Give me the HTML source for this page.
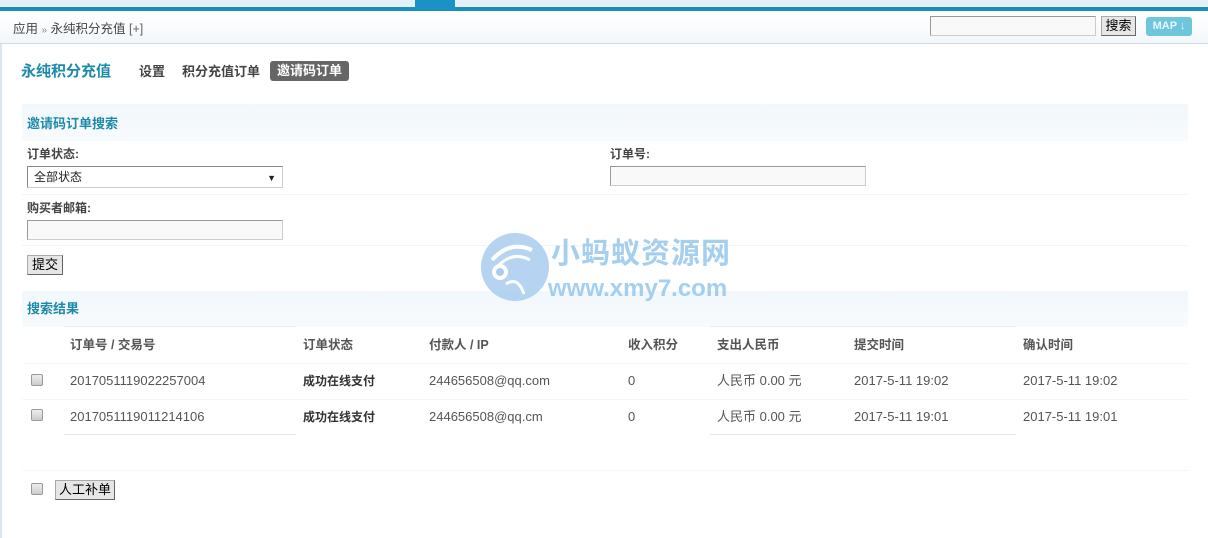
<!DOCTYPE html>
<html><head><meta charset="utf-8"><style>
*{margin:0;padding:0;box-sizing:border-box}
body{width:1208px;height:538px;overflow:hidden;background:#fff;font-family:"Liberation Sans","Noto Sans CJK SC",sans-serif;font-size:12px;color:#333;position:relative}
.a{position:absolute;white-space:nowrap;line-height:16px}
.b{font-weight:bold}
.band{background:linear-gradient(#f1f7fc,#f8fbfd)}
input.t{position:absolute;height:20px;border:1px solid #999;border-right-color:#ccc;border-bottom-color:#ccc;background:#f9f9f9}
.btn{position:absolute;background:#e6e6e6;border:1px solid #aaa;border-right-color:#666;border-bottom-color:#666;font-size:13px;color:#000;text-align:center}
.cb{position:absolute;width:12px;height:12px;border:1px solid #999;border-radius:2px;background:linear-gradient(#eee,#ccc)}
.th{font-weight:bold;color:#555;font-size:12.5px}
.td{color:#555;font-size:13px}
</style></head><body>
<div class="a" style="left:0;top:0;width:1208px;height:7px;background:#e4f1f9"></div>
<div class="a" style="left:0;top:7px;width:1208px;height:4px;background:#1792b6"></div>
<div class="a" style="left:415px;top:0;width:40px;height:11px;background:#1a92c4"></div>
<div class="a" style="left:0;top:11px;width:1208px;height:32px;background:linear-gradient(#fff,#f3f7fa)"></div>
<div class="a" style="left:0;top:43px;width:1208px;height:1px;background:#cfd9df"></div>
<div class="a" style="left:0;top:44px;width:2px;height:494px;background:#d7e7f1"></div>
<div class="a" style="left:13px;top:21px;font-size:12.5px;color:#444">应用 <span style="color:#888;font-size:10px">»</span> 永纯积分充值 <span style="color:#666">[+]</span></div>
<input class="t" style="left:930px;top:16px;width:166px;height:20px">
<div class="btn" style="left:1101px;top:16px;width:35px;height:20px;line-height:18px">搜索</div>
<div class="a" style="left:1146px;top:17px;width:46px;height:19px;background:#6ec6dc;border-radius:3px;color:#e8f8fc;font-size:11px;font-weight:bold;line-height:19px;text-align:center">MAP ↓</div>

<div class="a" style="left:21px;top:62px;font-size:15px;line-height:20px;color:#1c8aab;font-weight:bold">永纯积分充值</div>
<div class="a b" style="left:139px;top:64px;font-size:13px;color:#444">设置</div>
<div class="a b" style="left:182px;top:64px;font-size:13px;color:#444">积分充值订单</div>
<div class="a b" style="left:270px;top:61px;width:79px;height:20px;background:#666;color:#fff;border-radius:3px;font-size:13px;line-height:20px;text-align:center">邀请码订单</div>

<div class="a band" style="left:22px;top:104px;width:1166px;height:37px"></div>
<div class="a b" style="left:27px;top:116px;font-size:13px;color:#1c8aab">邀请码订单搜索</div>
<div class="a b" style="left:27px;top:146px;color:#444">订单状态:</div>
<div class="a" style="left:27px;top:166px;width:256px;height:22px;border:1px solid #888;border-right-color:#ccc;border-bottom-color:#ccc;background:#fff;font-size:12px;padding:2px 6px;color:#222">全部状态<span style="position:absolute;right:6px;top:3px;font-size:9px">▼</span></div>
<div class="a b" style="left:610px;top:146px;color:#444">订单号:</div>
<input class="t" style="left:610px;top:166px;width:256px;height:20px">
<div class="a" style="left:22px;top:194px;width:1166px;height:1px;background:#f4f4f4"></div>
<div class="a b" style="left:27px;top:200px;color:#444">购买者邮箱:</div>
<input class="t" style="left:27px;top:220px;width:256px;height:20px">
<div class="a" style="left:22px;top:245px;width:1166px;height:1px;background:#f4f4f4"></div>
<div class="btn" style="left:27px;top:255px;width:36px;height:20px;line-height:18px">提交</div>

<div class="a band" style="left:22px;top:291px;width:1166px;height:36px"></div>
<div class="a b" style="left:27px;top:301px;font-size:13px;color:#1c8aab">搜索结果</div>
<div class="a" style="left:64px;top:326px;width:232px;height:1px;background:#e3edf2"></div>
<div class="a" style="left:710px;top:326px;width:306px;height:1px;background:#e3edf2"></div>
<div class="a th" style="left:70px;top:337px">订单号 / 交易号</div>
<div class="a th" style="left:303px;top:337px">订单状态</div>
<div class="a th" style="left:429px;top:337px">付款人 / IP</div>
<div class="a th" style="left:628px;top:337px">收入积分</div>
<div class="a th" style="left:717px;top:337px">支出人民币</div>
<div class="a th" style="left:854px;top:337px">提交时间</div>
<div class="a th" style="left:1023px;top:337px">确认时间</div>
<div class="a" style="left:22px;top:363px;width:1166px;height:1px;background:#f6f6f6"></div>

<div class="cb" style="left:31px;top:374px"></div>
<div class="a td" style="left:70px;top:373px">2017051119022257004</div>
<div class="a b" style="left:303px;top:373px;color:#333">成功在线支付</div>
<div class="a td" style="left:429px;top:373px">244656508@qq.com</div>
<div class="a td" style="left:628px;top:373px">0</div>
<div class="a td" style="left:717px;top:373px">人民币 0.00 元</div>
<div class="a td" style="left:854px;top:373px">2017-5-11 19:02</div>
<div class="a td" style="left:1023px;top:373px">2017-5-11 19:02</div>
<div class="a" style="left:22px;top:399px;width:1166px;height:1px;background:#f6f6f6"></div>

<div class="cb" style="left:31px;top:409px"></div>
<div class="a td" style="left:70px;top:409px">2017051119011214106</div>
<div class="a b" style="left:303px;top:409px;color:#333">成功在线支付</div>
<div class="a td" style="left:429px;top:409px">244656508@qq.cm</div>
<div class="a td" style="left:628px;top:409px">0</div>
<div class="a td" style="left:717px;top:409px">人民币 0.00 元</div>
<div class="a td" style="left:854px;top:409px">2017-5-11 19:01</div>
<div class="a td" style="left:1023px;top:409px">2017-5-11 19:01</div>
<div class="a" style="left:64px;top:434px;width:232px;height:1px;background:#dde8ee"></div>
<div class="a" style="left:710px;top:434px;width:306px;height:1px;background:#dde8ee"></div>
<div class="a" style="left:22px;top:470px;width:1166px;height:1px;background:#f6f6f6"></div>

<div class="cb" style="left:31px;top:483px"></div>
<div class="btn" style="left:55px;top:480px;width:60px;height:20px;line-height:18px">人工补单</div>

<svg class="a" style="left:480px;top:232px" width="72" height="72" viewBox="0 0 72 72">
<circle cx="35" cy="35" r="34" fill="#a9cdee" opacity="0.85"/>
<path d="M12 28 Q30 8 52 18" stroke="#fff" stroke-width="4" fill="none"/>
<path d="M16 36 Q32 18 50 28" stroke="#fff" stroke-width="3" fill="none"/>
<circle cx="20" cy="40" r="8" fill="#fff"/><circle cx="20" cy="40" r="4" fill="#a9cdee"/>
<path d="M26 52 Q38 44 44 62" stroke="#fff" stroke-width="3" fill="none"/>
</svg>
<div class="a" style="left:551px;top:236px;font-size:29px;line-height:36px;font-weight:bold;color:#9ccaee;opacity:0.9;letter-spacing:1px">小蚂蚁资源网</div>
<div class="a" style="left:548px;top:275px;font-size:24px;line-height:28px;font-weight:bold;color:#9ccaee;opacity:0.9">www.xmy7.com</div>
</body></html>
